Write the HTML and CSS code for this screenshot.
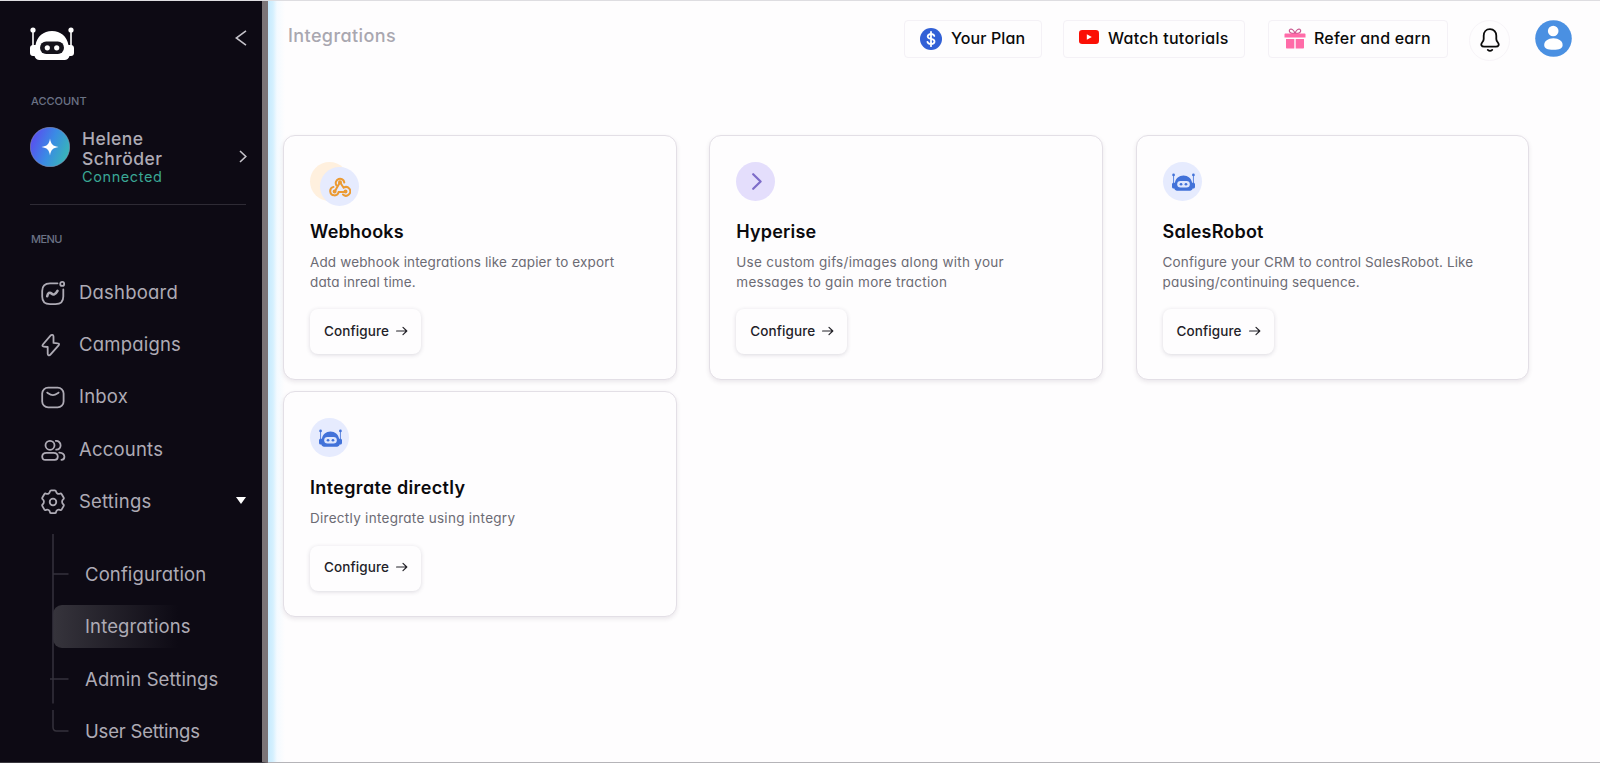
FILE: index.html
```html
<!DOCTYPE html>
<html lang="en">
<head>
    <meta charset="utf-8">
    <title>Integrations</title>
    <link rel="stylesheet" href="styles.css">
</head>
<body>
    <!-- Shared robot mark -->
    <svg class="sprite">
        <symbol id="robot" viewBox="0 0 44 33">
            <path d="M3 3v18M41 3v18" stroke="currentColor" stroke-width="1.6"/>
            <circle cx="3" cy="3" r="2.6" fill="currentColor"/>
            <circle cx="41" cy="3" r="2.6" fill="currentColor"/>
            <path d="M3 18h2.500C7 9.500 13.500 4 22 4s15 5.500 16.500 14H41c1.700 0 3 1.300 3 3v5c0 1.700-1.300 3-3 3h-1.500c-.8 2.500-2.500 4-5 4h-25c-2.500 0-4.200-1.500-5-4H3c-1.700 0-3-1.300-3-3v-5c0-1.700 1.300-3 3-3z" fill="currentColor"/>
            <rect class="visor" x="10" y="14.500" width="24" height="12.500" rx="6.200"/>
            <circle cx="17.300" cy="20.800" r="2.600" fill="currentColor"/>
            <circle cx="26.700" cy="20.800" r="2.600" fill="currentColor"/>
        </symbol>
        <symbol id="arrow" viewBox="0 0 12 10">
            <path d="M.6 5h10M7 1.400L10.800 5 7 8.600" fill="none" stroke="currentColor" stroke-width="1.200" stroke-linecap="round" stroke-linejoin="round"/>
        </symbol>
    </svg>

    <div class="sidebar">
        <div class="brand">
            <svg class="logo"><use href="#robot"/></svg>
            <svg class="collapse" viewBox="0 0 12 16"><path d="M11 .8L1.200 8l9.800 7.200"/></svg>
        </div>

        <h6 class="label">ACCOUNT</h6>
        <div class="profile">
            <svg class="avatar" viewBox="0 0 40 40">
                <defs>
                    <linearGradient id="avatarFill" x1="0" y1=".3" x2="1" y2=".7">
                        <stop offset="0" stop-color="#5a4cf0"/>
                        <stop offset=".5" stop-color="#3a8be4"/>
                        <stop offset="1" stop-color="#38b9b4"/>
                    </linearGradient>
                </defs>
                <circle cx="20" cy="20" r="19.700" fill="url(#avatarFill)" stroke="#8d92b8" stroke-width=".6"/>
                <path d="M20 11.500c.9 5.600 2.800 7.600 8.500 8.500-5.700.9-7.600 2.900-8.500 8.500-.9-5.600-2.800-7.600-8.500-8.500 5.700-.9 7.600-2.900 8.500-8.500z" fill="#fff"/>
            </svg>
            <div class="who">
                <div class="name">Helene<br>Schröder</div>
                <div class="status">Connected</div>
            </div>
            <svg class="expand" viewBox="0 0 8 13"><path d="M1 1l5.800 5.500L1 12"/></svg>
        </div>

        <h6 class="label menu-label">MENU</h6>
        <div class="menu">
            <a class="item">
                <svg viewBox="0 0 24 24"><path d="M16.500 2.300H9C4 2.300 1.200 5 1.200 10v5.500c0 5 2.800 7.700 7.800 7.700h5.500c5 0 7.800-2.700 7.800-7.700V8.500"/><circle cx="21.200" cy="2.900" r="2"/><path d="M6.200 15.200c.8-3.400 2.600-4.300 4.300-2.700s3.600 1.600 6-2.700" stroke-width="2.600"/></svg>
                <span>Dashboard</span>
            </a>
            <a class="item">
                <svg viewBox="0 0 24 24"><path d="M9.500 2.600L1.900 11.500c-.9 1.100-.5 2 .9 2.100l3.900.4v6.700c0 1.800 1.600 2.300 2.700 1l8.200-9.300c.9-1.100.5-2-.9-2.100l-4.200-.4V3.500c0-1.800-1.900-2.200-3-.9z"/></svg>
                <span>Campaigns</span>
            </a>
            <a class="item">
                <svg viewBox="0 0 24 24"><rect x="1.200" y="2.600" width="21.400" height="19.800" rx="6"/><path d="M6.200 7.600c1.900 1.300 3.600 2.600 5.700 2.600s3.800-1.300 5.700-2.600"/></svg>
                <span>Inbox</span>
            </a>
            <a class="item">
                <svg viewBox="0 0 24 24"><circle cx="9" cy="7.300" r="4.500"/><path d="M14.800 2.900c2.500-.3 4.800 1.700 4.800 4.400s-2 4.300-4.400 4.400M5.500 14.800h7c2.500 0 4.300 1.500 4.300 3.800s-1.200 3.300-3 3.300H4.200c-1.800 0-3-1-3-3.300s1.800-3.800 4.300-3.800zM18.300 14.600c2.900.2 5.100 1.700 5.100 4.100 0 1.800-1 3-3 3.200"/></svg>
                <span>Accounts</span>
            </a>
            <a class="item">
                <svg viewBox="0 0 24 24"><circle cx="12" cy="12" r="3.300"/><path d="M10.300 .4h3.400c.8 0 1.300.5 1.400 1.200.3 1.900 2 2.800 3.800 2.100.7-.3 1.400-.1 1.800.5l1.900 3.300c.4.700.2 1.400-.4 1.900-1.500 1.200-1.500 3.600 0 4.800.6.500.8 1.200.4 1.900l-1.900 3.300c-.4.600-1.100.8-1.800.5-1.800-.7-3.500.2-3.800 2.100-.1.700-.6 1.200-1.400 1.200h-3.400c-.8 0-1.300-.5-1.400-1.200-.3-1.900-2-2.800-3.800-2.100-.7.300-1.400.1-1.800-.5l-1.900-3.300c-.4-.7-.2-1.400.4-1.900 1.500-1.200 1.500-3.600 0-4.800-.6-.5-.8-1.200-.4-1.900l1.900-3.300c.4-.6 1.100-.8 1.800-.5 1.800.7 3.500-.2 3.800-2.100.1-.7.600-1.200 1.400-1.200z"/></svg>
                <span>Settings</span>
                <i class="caret"></i>
            </a>
        </div>
        <div class="submenu">
            <svg class="tree" viewBox="0 0 20 200"><path d="M3 0v169.500M3 40h15.500M0 145h18.500M3 176v17c0 2.500 1 4 3.500 4h12"/></svg>
            <a>Configuration</a>
            <a class="active">Integrations</a>
            <a>Admin Settings</a>
            <a class="last">User Settings</a>
        </div>
    </div>

    <div class="main">
        <div class="topbar">
            <h1>Integrations</h1>
            <a class="pill plan">
                <svg width="22" height="22" viewBox="0 0 22 22"><circle cx="11" cy="11" r="11" fill="#3260d6"/><path d="M14.300 8c-.4-1.300-1.600-2-3.300-2-1.900 0-3.300.9-3.300 2.400 0 3.400 6.800 1.700 6.800 5.100 0 1.600-1.500 2.500-3.500 2.500-1.900 0-3.200-.8-3.600-2.200M11 3.800v14.400" fill="none" stroke="#fff" stroke-width="1.800" stroke-linecap="round"/></svg>
                <span>Your Plan</span>
            </a>
            <a class="pill watch">
                <svg width="20" height="14" viewBox="0 0 20 14"><rect width="20" height="14" rx="3.200" fill="#fb0f05"/><path d="M7.800 4.200v5.600l5-2.800z" fill="#fff"/></svg>
                <span>Watch tutorials</span>
            </a>
            <a class="pill refer">
                <svg width="22" height="21" viewBox="0 0 22 21"><path d="M11 5.300C9.500 1.500 7.500.6 6.200 1.300 4.500 2.200 5.300 5 8 5.300zM11 5.300c1.500-3.800 3.500-4.700 4.800-4 1.700.9.900 3.700-1.800 4z" fill="none" stroke="#c9578f" stroke-width="1.200"/><path d="M1.500 5.500h19c.6 0 1 .4 1 1v3h-21v-3c0-.6.400-1 1-1zM2 11h8.300v9.500H3c-.6 0-1-.4-1-1zM11.700 11H20v8.500c0 .6-.4 1-1 1h-7.300z" fill="#ff6ba8"/></svg>
                <span>Refer and earn</span>
            </a>
            <div class="bell">
                <svg width="20" height="24" viewBox="0 0 20 24"><path d="M10 1.200c-4 0-6.300 2.900-6.300 6.500v3.200c0 1.300-.5 2.200-1.400 3.300-1.900 2.400-1 4.400 1.900 4.400h11.600c2.900 0 3.800-2 1.900-4.400-.9-1.100-1.400-2-1.400-3.300V7.700c0-3.600-2.300-6.500-6.300-6.500z" fill="none" stroke="#0a0a0a" stroke-width="1.800"/><path d="M7.800 21.900c1.200 1.100 3.200 1.100 4.400 0" fill="none" stroke="#0a0a0a" stroke-width="1.800" stroke-linecap="round"/></svg>
            </div>
            <svg class="user" viewBox="0 0 37 37"><circle cx="18.500" cy="18.500" r="18.300" fill="#4a90e2"/><circle cx="18.200" cy="11" r="5.300" fill="#fff"/><path d="M9.200 25c0-3.700 3.700-6.700 9.200-6.700s9.200 3 9.200 6.700c0 3.500-3.200 4.800-9.200 4.800S9.200 28.500 9.200 25z" fill="#fff"/></svg>
        </div>

        <div class="cards">
            <div class="card">
                <div class="icon webhook">
                    <div class="icon blue">
                        <svg width="22" height="20" viewBox="0 0 22 20" fill="none" stroke="#eb9a33" stroke-width="2" stroke-linecap="round"><path d="M7.300 8.200a4.300 4.300 0 1 1 8-2.700M4.500 9.900a4.300 4.300 0 1 0 5.200 5.200h6.800M14 17.500a4.300 4.300 0 1 0 .6-6.800L11 5.200 6 14"/><circle cx="11" cy="5.200" r="1"/><circle cx="5.600" cy="14.500" r="1"/><circle cx="16.500" cy="14.500" r="1"/></svg>
                    </div>
                </div>
                <h3>Webhooks</h3>
                <p>Add webhook integrations like zapier to export<br>data inreal time.</p>
                <a class="configure">Configure <svg><use href="#arrow"/></svg></a>
            </div>
            <div class="card">
                <div class="icon purple">
                    <svg width="10" height="17" viewBox="0 0 10 17"><path d="M1.200 1.200L8.600 8.500l-7.400 7.300" fill="none" stroke="#7d6cc9" stroke-width="2.200" stroke-linecap="round" stroke-linejoin="round"/></svg>
                </div>
                <h3>Hyperise</h3>
                <p class="wide">Use custom gifs/images along with your<br>messages to gain more traction</p>
                <a class="configure">Configure <svg><use href="#arrow"/></svg></a>
            </div>
            <div class="card">
                <div class="icon blue"><svg class="bot"><use href="#robot"/></svg></div>
                <h3>SalesRobot</h3>
                <p>Configure your CRM to control SalesRobot. Like<br>pausing/continuing sequence.</p>
                <a class="configure">Configure <svg><use href="#arrow"/></svg></a>
            </div>
            <div class="card">
                <div class="icon blue"><svg class="bot"><use href="#robot"/></svg></div>
                <h3 class="wide">Integrate directly</h3>
                <p class="wide">Directly integrate using integry</p>
                <a class="configure">Configure <svg><use href="#arrow"/></svg></a>
            </div>
        </div>
    </div>
</body>
</html>
```
FILE: styles.css
```css
* {
    box-sizing: border-box;
}
body {
    margin: 0;
    height: 763px;
    display: flex;
    overflow: hidden;
    background: #fefdfe;
    border-top: 1px solid #dedde1;
    font-family: Inter, "Open Sans", sans-serif;
    font-feature-settings: "cv11"; /* single-storey a */
}
h1, h3, h6, p {
    margin: 0;
}
.sprite {
    display: none;
}

/* Sidebar */
.sidebar {
    width: 268px;
    flex: none;
    padding: 26px 16px 0 30px;
    background: #0d0a14;
    border-right: 6px solid #7b7477;
    border-bottom: 1px solid #3a383f;
    color: #aeabb5;
}
.brand {
    display: flex;
    justify-content: space-between;
    height: 33px;
}
.logo {
    width: 44px;
    height: 33px;
    color: #fff;
}
.visor {
    fill: var(--visor, #15131b);
}
.collapse {
    width: 12px;
    height: 16px;
    margin: 3px -1px 0 0;
}
.collapse path, .expand path {
    fill: none;
    stroke: #c5c3ca;
    stroke-width: 1.6;
}
.label {
    margin-top: 33px;
    padding-left: 1px;
    font-size: 11px;
    font-weight: 500;
    line-height: 16px;
    color: #6b7285;
}
.profile {
    display: flex;
    margin-top: 18px;
    height: 78px;
    border-bottom: 1px solid #2e2b35;
}
.avatar {
    width: 40px;
    height: 40px;
}
.who {
    flex: 1;
    padding: 2px 0 0 12px;
}
.name {
    font-size: 17.5px;
    font-weight: 500;
    line-height: 20px;
    letter-spacing: 0.45px;
}
.status {
    font-size: 14.5px;
    line-height: 15px;
    letter-spacing: 0.6px;
    color: #3aa795;
}
.expand {
    width: 8px;
    height: 13px;
    margin: 23px -1px 0 0;
}
.menu-label {
    margin-top: 26px;
    letter-spacing: -0.6px;
}
.menu {
    margin-top: 19px;
}
.item {
    display: flex;
    align-items: center;
    height: 52.2px;
    padding-left: 11px;
    font-size: 18.5px;
    letter-spacing: 0.2px;
}
.item svg {
    width: 24px;
    height: 24px;
    margin: 2px 14px 0 0;
    overflow: visible;
    fill: none;
    stroke: #aeabb5;
    stroke-width: 1.8;
    stroke-linecap: round;
    stroke-linejoin: round;
}
.caret {
    margin-left: auto;
    border: 5.5px solid transparent;
    border-top: 7px solid #fff;
    border-bottom: 0;
}
.submenu {
    position: relative;
    display: flex;
    flex-direction: column;
    gap: 8.8px;
    margin-left: 23px;
    padding-top: 25.5px;
}
.submenu a {
    display: flex;
    align-items: center;
    height: 43.5px;
    padding-left: 32px;
    font-size: 18.5px;
    letter-spacing: 0.12px;
    white-space: nowrap;
}
.submenu .active {
    border-radius: 9px;
    background: linear-gradient(90deg, #36343c, #0d0a14 125px);
}
.submenu .last {
    letter-spacing: -0.2px;
}
/* Branch lines joining the sub items */
.tree {
    position: absolute;
    left: -3px;
    top: 7px;
    width: 20px;
    height: 200px;
    fill: none;
    stroke: #35323c;
    stroke-width: 1.5;
}

/* Main area */
.main {
    flex: 1;
    background: linear-gradient(90deg, #c6eafe, #d5f0fe 5px, #f4faff 9px, #fefdfe 17px);
    border-bottom: 1px solid #b5b4b8;
}
.topbar {
    display: flex;
    align-items: center;
    height: 75px;
    padding: 0 28px 0 20px;
}
h1 {
    flex: 1;
    margin-top: -7px;
    font-size: 18px;
    font-weight: 500;
    letter-spacing: 0.4px;
    color: #a9a7b0;
}
.pill {
    display: flex;
    align-items: center;
    height: 38px;
    padding-left: 15px;
    border: 1px solid #f4f1f6;
    border-radius: 4px;
    font-size: 16px;
    font-weight: 500;
    letter-spacing: 0.28px;
    color: #0a0a0a;
    white-space: nowrap;
}
.pill span {
    padding-bottom: 2px;
}
.plan {
    width: 138px;
    gap: 9px;
    margin-right: 21px;
    letter-spacing: 0.1px;
}
.watch {
    width: 182px;
    gap: 9px;
    margin-right: 23px;
}
.watch svg {
    margin-bottom: 3px;
}
.refer {
    width: 180px;
    gap: 8px;
    margin-right: 21px;
    letter-spacing: 0.2px;
}
.bell {
    display: flex;
    align-items: center;
    justify-content: center;
    width: 41px;
    height: 41px;
    margin: 3px 25px 0 0;
    border: 1px solid #f7f4f8;
    border-radius: 50%;
}
.user {
    width: 37px;
    height: 37px;
}

/* Integration cards */
.cards {
    display: grid;
    grid-template-columns: repeat(3, 393.5px);
    gap: 11px 32.8px;
    padding: 59px 0 0 15px;
}
.card {
    padding: 26px 26px 25px;
    border: 1px solid #e3dfe6;
    border-radius: 12px;
    background: #fefdfe;
    box-shadow: 0 2px 4px rgba(60, 40, 70, 0.1);
}
.icon {
    display: flex;
    align-items: center;
    justify-content: center;
    width: 39px;
    height: 39px;
    border-radius: 50%;
}
.webhook {
    background: #fff0de;
}
.webhook .blue {
    position: relative;
    left: 10px;
    top: 5px;
    flex: none;
}
.blue {
    background: #e6ebfe;
}
.purple {
    background: #e4defc;
    padding-left: 3px;
}
.bot {
    --visor: #dfe7fd;
    width: 23px;
    height: 18px;
    margin-left: 2px;
    color: #4272d9;
}
h3 {
    margin-top: 19px;
    font-size: 18px;
    font-weight: 600;
    line-height: 24px;
    letter-spacing: 0.18px;
    color: #0b0a0d;
}
h3.wide {
    letter-spacing: 0.35px;
}
p {
    margin-top: 9px;
    font-size: 13.5px;
    line-height: 19.5px;
    letter-spacing: 0.14px;
    color: #6c6b74;
    white-space: nowrap;
}
p.wide {
    letter-spacing: 0.28px;
}
.configure {
    display: flex;
    align-items: center;
    gap: 7px;
    width: 111px;
    height: 45px;
    margin-top: 17px;
    padding: 0 0 2px 14px;
    border-radius: 8px;
    box-shadow: 0 1px 4px rgba(50, 40, 70, 0.17);
    font-size: 13.5px;
    font-weight: 500;
    letter-spacing: 0.1px;
    color: #232228;
}
.configure svg {
    width: 12px;
    height: 10px;
}
```
